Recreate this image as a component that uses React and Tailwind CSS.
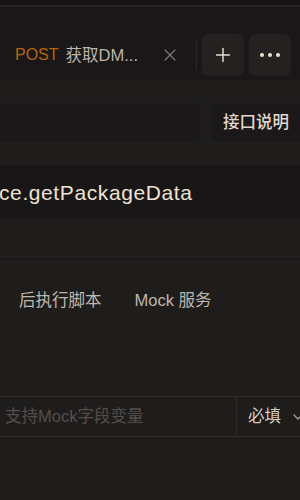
import { Plus, X, ChevronDown } from "lucide-react";

const font = { fontFamily: '"Liberation Sans", "Noto Sans CJK SC", sans-serif' };

const App = () => {
  return (
    <div
      className="w-[300px] h-[500px] overflow-hidden bg-[#1f1d1c] flex flex-col"
      style={font}
    >
      {/* top strip */}
      <div className="h-[5px] bg-[#161415]" />
      <div className="h-[2px] bg-[#262423]" />

      {/* tab bar */}
      <div className="h-[73px] bg-[#191718] flex items-end pb-[4px]">
        <div className="flex items-center pl-[15px] w-[196px] h-[42px] shrink-0">
          <span className="text-[16px] text-[#b8640f]">POST</span>
          <span className="ml-[7px] text-[16.5px] text-[#bdb4ab] whitespace-nowrap">
            获取DM...
          </span>
          <X className="ml-[22px] text-[#7b7470]" size={20} strokeWidth={1.5} />
        </div>
        <div className="w-px h-[30px] mb-[6px] bg-[#2a2827] shrink-0" />
        <div className="flex gap-[5px] ml-[5px]">
          <button className="w-[42px] h-[42px] rounded-[7px] bg-[#242221] flex items-center justify-center">
            <Plus className="text-[#e6dccf]" size={22} strokeWidth={1.6} />
          </button>
          <button className="w-[42px] h-[42px] rounded-[7px] bg-[#242221] flex items-center justify-center gap-[3.5px]">
            <span className="w-[4.5px] h-[4.5px] rounded-full bg-[#efe4d8]" />
            <span className="w-[4.5px] h-[4.5px] rounded-full bg-[#efe4d8]" />
            <span className="w-[4.5px] h-[4.5px] rounded-full bg-[#efe4d8]" />
          </button>
        </div>
      </div>

      {/* url row */}
      <div className="flex items-center gap-[12px] mt-[23px] h-[39px]">
        <div className="w-[200px] h-full rounded-r-[7px] bg-[#1a1819] shrink-0" />
        <button className="flex-1 h-full rounded-l-[7px] bg-[#1a1819] text-left pl-[11px] text-[16.5px] font-medium text-[#e3d8cc] whitespace-nowrap">
          接口说明
        </button>
      </div>

      {/* name row */}
      <div className="mt-[23px] h-[53px] bg-[#181617] flex items-center">
        <span className="text-[21px] tracking-[0.6px] text-[#efe2d3] -ml-[1px] pt-[2px] whitespace-nowrap">
          ce.getPackageData
        </span>
      </div>

      <div className="h-[40px]" />
      <div className="h-[2px] bg-[#1a1819]" />

      {/* tabs */}
      <div className="flex items-center gap-[33px] pl-[19px] h-[80px] text-[16.5px] text-[#bfb6ad] whitespace-nowrap">
        <span>后执行脚本</span>
        <span>Mock 服务</span>
      </div>

      <div className="h-[56px]" />

      {/* param row */}
      <div className="h-[41px] border-y border-[#2f2c2b] flex">
        <div className="w-[237px] shrink-0 border-r border-[#2f2c2b] flex items-center pl-[5px] text-[16.5px] text-[#554d4a] whitespace-nowrap">
          支持Mock字段变量
        </div>
        <div className="flex items-center pl-[11px] gap-[9px] text-[16.5px] text-[#d6cbbf] whitespace-nowrap">
          <span>必填</span>
          <ChevronDown className="text-[#a49b93] shrink-0" size={16} />
        </div>
      </div>
    </div>
  );
};

export default App;
